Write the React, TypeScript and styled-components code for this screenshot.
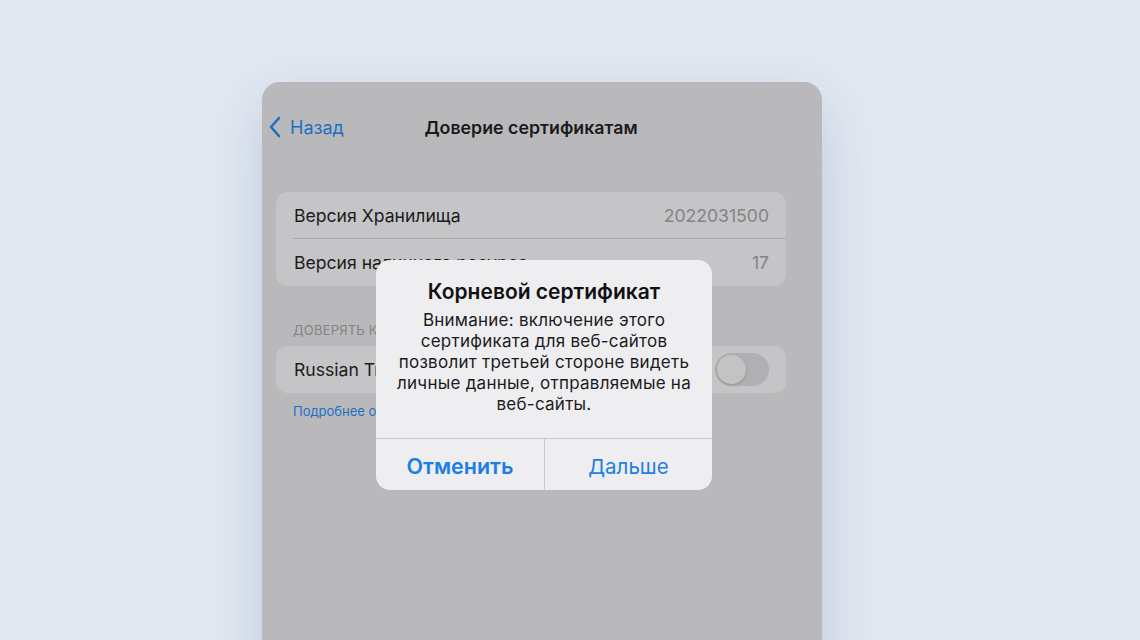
import React from "react";
import styled, { createGlobalStyle } from "styled-components";

const GlobalStyle = createGlobalStyle`
  html, body {
    margin: 0;
    padding: 0;
    background: #e2e9f3;
    font-family: Inter, "Noto Sans", "Liberation Sans", sans-serif;
    -webkit-font-smoothing: antialiased;
  }
`;

const Page = styled.div`
  width: 1140px;
  height: 640px;
  overflow: hidden;
  display: flex;
  justify-content: flex-start;
  padding: 82px 0 0 262px;
  box-sizing: border-box;
  background: #e2e9f3;
`;

const Phone = styled.div`
  position: relative;
  width: 560px;
  height: 620px;
  border-radius: 18px 18px 0 0;
  background: #b9b9bb;
  box-shadow: 0 20px 60px rgba(120, 140, 170, 0.35);
`;

const NavBar = styled.div`
  position: relative;
  height: 90px;
  display: flex;
  align-items: center;
  padding-left: 6px;
  box-sizing: border-box;
`;

const Back = styled.div`
  display: flex;
  align-items: center;
  gap: 8px;
  color: #1e6fc4;
  font-size: 18px;
`;

const Title = styled.div`
  position: absolute;
  left: 0;
  right: 0;
  top: 0;
  height: 90px;
  display: flex;
  align-items: center;
  justify-content: center;
  font-size: 17.8px;
  font-weight: 600;
  color: #1b1b1d;
  padding-right: 22px;
  pointer-events: none;
`;

const Content = styled.div`
  padding: 20px 36px 0 14px;
`;

const Group = styled.div`
  background: #c5c5c7;
  border-radius: 12px;
  overflow: hidden;
`;

const Row = styled.div<{ $divider?: boolean }>`
  position: relative;
  height: 47px;
  display: flex;
  align-items: center;
  justify-content: space-between;
  padding: 0 17px 0 18px;
  font-size: 17.6px;
  color: #1b1b1d;
  ${({ $divider }) =>
    $divider &&
    `
    &::after {
      content: "";
      position: absolute;
      left: 17px;
      right: 0;
      bottom: 0;
      height: 1px;
      background: #a9a9ac;
    }
  `}
`;

const Value = styled.span`
  color: #838386;
`;

const SectionHeader = styled.div`
  margin: 36px 0 8px 17px;
  font-size: 13px;
  color: #838386;
  letter-spacing: 0.2px;
`;

const Toggle = styled.div`
  width: 54px;
  height: 33px;
  border-radius: 17px;
  background: #b0b0b2;
  display: flex;
  align-items: center;
  padding: 2px;
  box-sizing: border-box;
`;

const Knob = styled.div`
  width: 29px;
  height: 29px;
  border-radius: 50%;
  background: #c3c3c5;
  box-shadow: 0 1px 3px rgba(0, 0, 0, 0.18);
`;

const Footnote = styled.div`
  margin: 10px 0 0 17px;
  font-size: 13px;
  color: #1e6fc4;
`;

const Overlay = styled.div`
  position: absolute;
  inset: 0;
  display: flex;
  justify-content: center;
  align-items: flex-start;
  padding-top: 178px;
  padding-left: 4px;
`;

const Alert = styled.div`
  width: 336px;
  background: #eeeef0;
  border-radius: 14px;
  overflow: hidden;
  text-align: center;
`;

const AlertBody = styled.div`
  padding: 19px 10px 23px;
`;

const AlertTitle = styled.div`
  font-size: 21px;
  font-weight: 600;
  color: #111113;
  line-height: 26px;
`;

const AlertMessage = styled.div`
  margin-top: 5px;
  font-size: 17px;
  letter-spacing: 0.25px;
  line-height: 21px;
  color: #1b1b1d;
  white-space: nowrap;
`;

const Actions = styled.div`
  display: grid;
  grid-template-columns: 1fr 1fr;
  border-top: 1px solid #c9c9cc;
  height: 51px;
`;

const Action = styled.div<{ $bold?: boolean }>`
  display: flex;
  align-items: center;
  justify-content: center;
  padding-top: 3px;
  font-size: ${({ $bold }) => ($bold ? "21.5px" : "20.5px")};
  color: #1b7fe6;
  font-weight: ${({ $bold }) => ($bold ? 600 : 400)};
  & + & {
    border-left: 1px solid #c9c9cc;
  }
`;

export default function App() {
  return (
    <>
      <GlobalStyle />
      <Page>
        <Phone>
          <NavBar>
            <Back>
              <svg width="14" height="22" viewBox="0 0 14 22">
                <path
                  d="M11 2 L3 11 L11 20"
                  fill="none"
                  stroke="#1e6fc4"
                  strokeWidth="2.6"
                  strokeLinecap="round"
                  strokeLinejoin="round"
                />
              </svg>
              <span>Назад</span>
            </Back>
            <Title>Доверие сертификатам</Title>
          </NavBar>
          <Content>
            <Group>
              <Row $divider>
                <span>Версия Хранилища</span>
                <Value>2022031500</Value>
              </Row>
              <Row>
                <span>Версия наличного ресурса</span>
                <Value>17</Value>
              </Row>
            </Group>
            <SectionHeader>ДОВЕРЯТЬ КОРНЕВЫМ СЕРТИФИКАТАМ</SectionHeader>
            <Group>
              <Row>
                <span>Russian Trusted Root CA</span>
                <Toggle>
                  <Knob />
                </Toggle>
              </Row>
            </Group>
            <Footnote>Подробнее о доверенных сертификатах</Footnote>
          </Content>
          <Overlay>
            <Alert>
              <AlertBody>
                <AlertTitle>Корневой сертификат</AlertTitle>
                <AlertMessage>
                  Внимание: включение этого
                  <br />
                  сертификата для веб-сайтов
                  <br />
                  позволит третьей стороне видеть
                  <br />
                  личные данные, отправляемые на
                  <br />
                  веб-сайты.
                </AlertMessage>
              </AlertBody>
              <Actions>
                <Action $bold>Отменить</Action>
                <Action>Дальше</Action>
              </Actions>
            </Alert>
          </Overlay>
        </Phone>
      </Page>
    </>
  );
}
